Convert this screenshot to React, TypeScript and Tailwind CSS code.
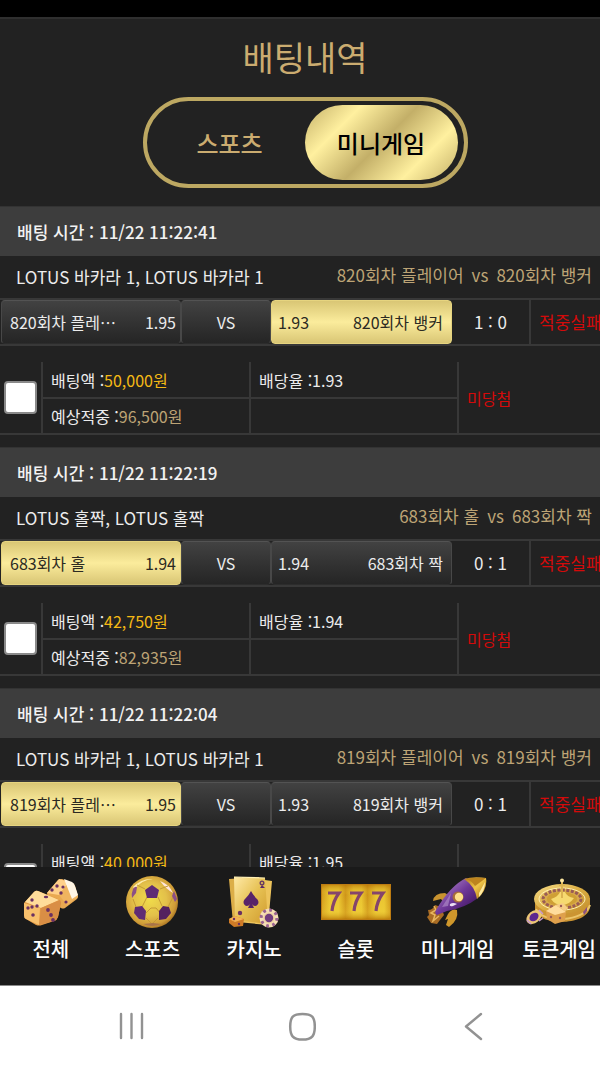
import type { ReactNode } from "react";
import clsx from "clsx";

type Pick = "home" | "away";

type Bet = {
  time: string;
  league: string;
  home: string;
  away: string;
  homeOdds: string;
  awayOdds: string;
  pick: Pick;
  score: string;
  stake: string;
  payout: string;
  odds: string;
};

const BETS: Bet[] = [
  {
    time: "11/22 11:22:41",
    league: "LOTUS 바카라 1, LOTUS 바카라 1",
    home: "820회차 플레이어",
    away: "820회차 뱅커",
    homeOdds: "1.95",
    awayOdds: "1.93",
    pick: "away",
    score: "1 : 0",
    stake: "50,000원",
    payout: "96,500원",
    odds: "1.93",
  },
  {
    time: "11/22 11:22:19",
    league: "LOTUS 홀짝, LOTUS 홀짝",
    home: "683회차 홀",
    away: "683회차 짝",
    homeOdds: "1.94",
    awayOdds: "1.94",
    pick: "home",
    score: "0 : 1",
    stake: "42,750원",
    payout: "82,935원",
    odds: "1.94",
  },
  {
    time: "11/22 11:22:04",
    league: "LOTUS 바카라 1, LOTUS 바카라 1",
    home: "819회차 플레이어",
    away: "819회차 뱅커",
    homeOdds: "1.95",
    awayOdds: "1.93",
    pick: "home",
    score: "0 : 1",
    stake: "40,000원",
    payout: "78,000원",
    odds: "1.95",
  },
];

function DiceIcon() {
  return (
    <svg viewBox="0 0 56 48" className="h-[48px] w-[56px]" aria-hidden="true">
      <path d="M24 15 35 2q2-1 4-1l10 4q2 1 3 3l3 10q0 2-1 3L42 30q-2 1-4 0L25 23z" fill="#e9a951" />
      <path d="M24 15 36 1l10 3-10 13z" fill="#ffd08a" />
      <path d="m46 4 4 2 5 13-11 8-8-10z" fill="#f0b45f" />
      <path d="m41 1 8 3q2 1 3 4l3 9-6 4-4-10z" fill="#fff5e4" />
      <path d="M1 25 11 14q2-2 4-1l20 8q3 1 3 4l-3 14q-1 3-4 4l-12 4q-3 1-6 0L3 41q-2-1-2-4z" fill="#e29a45" />
      <path d="M2 24 11 14q2-2 4-1l21 9-18 8z" fill="#ffdc9a" />
      <path d="m1 25 16 5-1 17-13-6q-2-1-2-4z" fill="#f8c06c" />
      <path d="m18 30 19-8 1 3-3 14q-1 3-4 4l-15 4z" fill="#d98e45" />
      <g fill="#6a3062">
        <circle cx="34" cy="8" r="1.7" />
        <circle cx="29" cy="12" r="1.7" />
        <circle cx="38" cy="15" r="1.7" />
        <circle cx="40" cy="9" r="1.6" />
        <circle cx="43" cy="24" r="1.6" />
        <ellipse cx="23" cy="19" rx="2.2" ry="1.2" />
        <circle cx="9" cy="22" r="1.7" />
        <circle cx="5" cy="30" r="1.7" />
        <circle cx="9" cy="29" r="1.7" />
        <circle cx="14" cy="28" r="1.7" />
        <circle cx="10" cy="37" r="1.8" />
        <circle cx="25" cy="32" r="1.9" />
        <circle cx="28" cy="37" r="1.9" />
        <circle cx="30" cy="42" r="1.9" />
      </g>
    </svg>
  );
}

function BallIcon() {
  return (
    <svg viewBox="0 0 54 54" className="h-[54px] w-[54px]" aria-hidden="true">
      <defs>
        <radialGradient id="ball" cx="46%" cy="45%" r="58%">
          <stop offset="0" stopColor="#f0dc4a" />
          <stop offset=".55" stopColor="#e3c04a" />
          <stop offset=".85" stopColor="#cf9c38" />
          <stop offset="1" stopColor="#a36e20" />
        </radialGradient>
      </defs>
      <circle cx="27" cy="27" r="26" fill="url(#ball)" />
      <path d="M8 12q9-9 20-8-12 1-18 10z" fill="#ffeeb0" />
      <path d="M35 6q9 3 13 12-7-4-13-12z" fill="#ffe6dc" />
      <path
        d="M20 14l-8-4M35 14l8-3M22 22l-5 10M33 22l4 9M21 38l5-5h5l5 6M8 24l3 8M48 22l-5 10M21 43l6 6 6-6"
        stroke="#c49a34"
        strokeWidth="1"
        fill="none"
      />
      <path d="m27 10 7 5-2 8H22l-2-8z" fill="#5f2b74" />
      <path d="m10 32 7-1 4 5-1 9-6-1-5-6z" fill="#5f2b74" />
      <path d="m44 32-6-1-4 5v9l7-1 5-6z" fill="#54215f" />
      <path d="M8 14q2-3 4-2l-1 6-4 5q-1-4 1-9z" fill="#8c4f86" />
      <path d="m49 16 3 8-2 3-3-6z" fill="#8c4f86" />
      <path d="M18 49q9 4 18 0l-8-1z" fill="#a97448" />
    </svg>
  );
}

function CardsIcon() {
  return (
    <svg viewBox="0 0 50 52" className="h-[52px] w-[50px]" aria-hidden="true">
      <defs>
        <linearGradient id="card" x1="0" y1="0" x2="1" y2="1">
          <stop offset="0" stopColor="#ffeaa8" />
          <stop offset=".5" stopColor="#e6c052" />
          <stop offset="1" stopColor="#cf9a2d" />
        </linearGradient>
      </defs>
      <path d="m0 3 30-2 4 40-30 6z" fill="#dcae48" />
      <path d="m13 1 30 4-4 44-31-3z" fill="#edc45c" />
      <path d="M5 1 36 2l3 46-33-4z" fill="url(#card)" />
      <path d="M5 1 36 2" stroke="#fff0b5" strokeWidth="1.2" />
      <path d="M22 15q2 4 6 8c3 3 1 7-2 7q-2 0-3-2l2 4h-6l2-4q-1 2-3 2c-3 0-5-4-2-7q4-4 6-8z" fill="#582469" />
      <circle cx="33" cy="7" r="1.8" fill="none" stroke="#6b3b62" strokeWidth="1.4" />
      <path d="m33 9 3 3h-5z" fill="#5b2869" />
      <circle cx="11" cy="37" r="2.2" fill="#6a3062" />
      <path d="m0 43 6-3 9 3-1 7-9 1-5-4z" fill="#cf7b27" />
      <path d="m0 43 6-3 9 3-9 3z" fill="#f3b255" />
      <circle cx="5" cy="43" r="1.2" fill="#6a3062" />
      <circle cx="10" cy="48" r="1.2" fill="#6a3062" />
      <circle cx="40" cy="42" r="9.5" fill="#f6dfb4" />
      <circle cx="40" cy="42" r="7.9" fill="none" stroke="#9a6390" strokeWidth="3" strokeDasharray="2.8 3.4" />
      <circle cx="40" cy="42" r="5.6" fill="#ecd0a0" />
      <circle cx="40" cy="42" r="4.2" fill="#713c7d" />
    </svg>
  );
}

function SlotIcon() {
  return (
    <svg viewBox="0 0 70 36" className="h-[36px] w-[70px]" aria-hidden="true">
      <defs>
        <linearGradient id="reel" x1="0" y1="0" x2="1" y2="0">
          <stop offset="0" stopColor="#c98a12" />
          <stop offset=".35" stopColor="#e6be2c" />
          <stop offset=".7" stopColor="#e6be2c" />
          <stop offset="1" stopColor="#c4820e" />
        </linearGradient>
        <linearGradient id="shade" x1="0" y1="0" x2="0" y2="1">
          <stop offset="0" stopColor="#b06c02" stopOpacity=".7" />
          <stop offset=".3" stopColor="#ffe94b" stopOpacity=".15" />
          <stop offset=".75" stopColor="#ffe94b" stopOpacity=".3" />
          <stop offset="1" stopColor="#b06c02" stopOpacity=".8" />
        </linearGradient>
      </defs>
      <path d="M0 0h25v36H0z" fill="url(#reel)" />
      <path d="M25 0h22v36H25z" fill="url(#reel)" />
      <path d="M47 0h23v36H47z" fill="url(#reel)" />
      <rect width="70" height="36" fill="url(#shade)" />
      <path d="M.5.5h69v35H.5z" fill="none" stroke="#bd7c12" />
      <path d="M7 9h11q-6 8-7 18M29 9h11q-6 8-7 18M51 9h11q-6 8-7 18" fill="none" stroke="#85456b" strokeWidth="3.2" />
    </svg>
  );
}

function RocketIcon() {
  return (
    <svg viewBox="0 0 62 50" className="h-[50px] w-[62px]" aria-hidden="true">
      <defs>
        <linearGradient id="hull" x1="0" y1="0" x2="1" y2="1">
          <stop offset=".25" stopColor="#9a6cb8" />
          <stop offset=".5" stopColor="#6f3899" />
          <stop offset=".85" stopColor="#431763" />
        </linearGradient>
        <linearGradient id="cone" x1="0" y1="0" x2="1" y2="1">
          <stop offset="0" stopColor="#b0771a" />
          <stop offset=".5" stopColor="#efc548" />
          <stop offset="1" stopColor="#a66d14" />
        </linearGradient>
      </defs>
      <path d="M7 24q1-8 12-8l6 4-5 8-5-6z" fill="#c9932f" />
      <path d="M22 37q4-6 9-4 2 10-8 17l-3-2 2-6-3 1z" fill="#cf972b" />
      <path d="M9 28q-2 5-7 5l1 5-2 2 4 6 6 1 3-4 4-5-3-8z" fill="#a96c24" />
      <path d="m8 29 2 4-5 3 4 2-2 6 6-5" fill="none" stroke="#e8b65e" strokeWidth="1.5" />
      <path d="M11 38q-3-2-1-5Q24 9 40 1q12 6 12 20-13 10-31 13z" fill="url(#hull)" />
      <path d="M38 2Q47-1 60 1q2 12-9 21Q49 9 38 2z" fill="url(#cone)" />
      <path d="M40 2q9-2 20-1L49 9q-3-5-9-7z" fill="#bd841e" />
      <path d="m53 16 6-11q0 9-6 15z" fill="#ffeaa0" />
      <circle cx="32" cy="20" r="5.5" fill="#a76c3c" />
      <circle cx="33" cy="20" r="4.2" fill="#ffe08a" />
      <path d="M24 27q3-2 7 0l-4 2q-4 1-3-2z" fill="#eee0f5" />
      <path d="m16 30 9-14-3 13z" fill="#b493cc" opacity=".6" />
    </svg>
  );
}

function RouletteIcon() {
  return (
    <svg viewBox="0 0 66 48" className="h-[48px] w-[66px]" aria-hidden="true">
      <defs>
        <linearGradient id="rim" x1="0" y1="0" x2="1" y2="1">
          <stop offset="0" stopColor="#f6dd8a" />
          <stop offset=".5" stopColor="#dcae42" />
          <stop offset="1" stopColor="#c08c2c" />
        </linearGradient>
      </defs>
      <path d="M9 21v10c3 18 53 17 55-2V20z" fill="#cb9432" />
      <path d="M10 31c6 15 49 13 54-4" fill="none" stroke="#ecc56a" strokeWidth="2" />
      <ellipse cx="36" cy="21" rx="28" ry="15" fill="url(#rim)" />
      <ellipse cx="36" cy="21" rx="23" ry="11" fill="none" stroke="#fff0b4" strokeWidth="1" />
      <ellipse cx="36" cy="21" rx="20" ry="9" fill="#d8aa4c" />
      <ellipse cx="36" cy="21" rx="19" ry="9" fill="none" stroke="#9a5c55" strokeWidth="3" strokeDasharray="3 1.500" />
      <ellipse cx="36" cy="21" rx="15" ry="7" fill="#cf9f35" />
      <path d="M25 21q7-2 9-7h5q2 5 9 6-5 7-12 7t-11-6z" fill="#f6da70" />
      <path d="M36 20V3M33 7h6" stroke="#dcb452" strokeWidth="2" />
      <circle cx="36" cy="2.500" r="2" fill="#ffe9a2" />
      <ellipse cx="8" cy="39" rx="8.500" ry="6" fill="#ecc676" transform="rotate(-40 8 39)" />
      <ellipse cx="8" cy="39" rx="5" ry="3.800" fill="#5e2890" transform="rotate(-40 8 39)" />
      <path d="m13 32 4 4M1 42l4 4M13 43l4-3" stroke="#c79ad0" strokeWidth="1.500" />
      <path d="m20 33 10-6 10 7-1 9-10 3-8-5z" fill="#dfa04c" />
      <path d="m20 33 10-6 10 7-11 3z" fill="#ffdc9c" />
      <path d="m29 27 8-2 5 5-3 3z" fill="#f6cd85" />
      <circle cx="25" cy="39" r="1.200" fill="#9b5a57" />
      <circle cx="34" cy="40" r="1.200" fill="#9b5a57" />
      <circle cx="35" cy="28" r="1.200" fill="#9b5a57" />
      <path d="m57 34 4-5v4l-3 4z" fill="#8a5080" />
    </svg>
  );
}

const MENU: { label: string; icon: ReactNode }[] = [
  { label: "전체", icon: <DiceIcon /> },
  { label: "스포츠", icon: <BallIcon /> },
  { label: "카지노", icon: <CardsIcon /> },
  { label: "슬롯", icon: <SlotIcon /> },
  { label: "미니게임", icon: <RocketIcon /> },
  { label: "토큰게임", icon: <RouletteIcon /> },
];

function OddsCell({ selected, children }: { selected?: boolean; children: ReactNode }) {
  return (
    <div
      className={clsx(
        "flex h-full min-w-0 items-center rounded border",
        selected
          ? "border-[#e6d47f] bg-linear-to-b from-[#d9c675] via-[#fbec9c] to-[#d9c675] text-[#2c2a22]"
          : "border-x-[#484848] border-t-[#535353] border-b-[#2c2c2c] bg-linear-to-b from-[#424242] to-[#252525] text-[#ececec]",
      )}
    >
      {children}
    </div>
  );
}

function BetCard({ bet }: { bet: Bet }) {
  return (
    <li className="border-t border-[#333333]">
      <h2 className="h-[49px] bg-[#3d3d3d] pl-[17px] text-[17px] leading-[50px] font-medium text-[#f2f2f2]">
        배팅 시간 : {bet.time}
      </h2>

      <div className="flex h-[42px] items-center justify-between pr-[18px] pl-4 text-[17px] leading-6">
        <p className="text-[#ececec]">{bet.league}</p>
        <p className="flex gap-2 pb-1 text-[#bda475]">
          <span>{bet.home}</span>
          <span>vs</span>
          <span>{bet.away}</span>
        </p>
      </div>

      <div className="grid h-[48px] grid-cols-[180px_90px_181px_79px_1fr] border-y-2 border-[#383838] pl-px text-base">
        <OddsCell selected={bet.pick === "home"}>
          <div className="flex w-full min-w-0 justify-between gap-6 pr-1 pl-2">
            <span className="truncate">{bet.home}</span>
            <span>{bet.homeOdds}</span>
          </div>
        </OddsCell>
        <OddsCell>
          <span className="w-full text-center">VS</span>
        </OddsCell>
        <OddsCell selected={bet.pick === "away"}>
          <div className="flex w-full min-w-0 justify-between gap-6 pr-2 pl-1.5">
            <span>{bet.awayOdds}</span>
            <span className="truncate">{bet.away}</span>
          </div>
        </OddsCell>
        <div className="flex items-center justify-center border-r-2 border-[#383838] text-[17px] text-[#ececec]">
          {bet.score}
        </div>
        <div className="flex items-center pl-2 text-[17px] whitespace-nowrap text-[#d40a0a]">적중실패</div>
      </div>

      <table className="mt-4 mb-3 w-full table-fixed border-b-2 border-[#383838] text-base text-[#ececec]">
        <colgroup>
          <col className="w-[42px]" />
          <col className="w-[208px]" />
          <col className="w-[208px]" />
          <col />
        </colgroup>
        <tbody>
          <tr className="h-[36px]">
            <td rowSpan={2} className="pl-1 align-middle">
              <input
                type="checkbox"
                aria-label={`${bet.time} 선택`}
                className="block size-[33px] appearance-none rounded border-2 border-[#8a8a8a] bg-white checked:bg-[#d9c675]"
              />
            </td>
            <td className="border-b-2 border-l-2 border-[#383838] pl-2">
              배팅액 :<span className="text-[#f5b915]">{bet.stake}</span>
            </td>
            <td className="border-b-2 border-l-2 border-[#383838] pl-2">배당율 :{bet.odds}</td>
            <td rowSpan={2} className="border-l-2 border-[#383838] pl-2 text-[#d40a0a]">
              미당첨
            </td>
          </tr>
          <tr className="h-[36px]">
            <td className="border-l-2 border-[#383838] pl-2">
              예상적중 :<span className="text-[#bda475]">{bet.payout}</span>
            </td>
            <td className="border-l-2 border-[#383838]" />
          </tr>
        </tbody>
      </table>
    </li>
  );
}

export default function App() {
  return (
    <div
      lang="ko"
      className="flex h-screen flex-col overflow-hidden bg-[#222222] font-['Noto_Sans_CJK_KR',sans-serif]"
    >
      <div className="h-[17px] shrink-0 bg-black" />

      {/* content runs a little wider than the viewport, as on the device */}
      <div className="flex min-h-0 w-[calc(100%+10px)] flex-1 flex-col">
        <header className="flex shrink-0 flex-col items-center border-t-2 border-[#2f2f2f] pb-[18px]">
          <h1 className="pt-3 text-[34px] leading-[52px] text-[#cbac70]">배팅내역</h1>
          <div className="mt-[14px] flex h-[91px] w-[325px] rounded-full border-4 border-[#bda862] p-1 pr-[6px] text-2xl">
            <button className="flex-1 pl-1 font-medium text-[#cbac70]">스포츠</button>
            <button className="w-[153px] rounded-full bg-[linear-gradient(135deg,#c3af68_0%,#fff09f_25%,#c3af68_50%,#fff09f_75%,#c3af68_100%)] font-medium text-black">
              미니게임
            </button>
          </div>
        </header>

        <ul className="min-h-0 flex-1 overflow-hidden">
          {BETS.map((bet) => (
            <BetCard key={bet.time} bet={bet} />
          ))}
        </ul>

        <nav className="grid h-[118px] shrink-0 grid-cols-6 bg-[#1a1a1a]">
          {MENU.map((item) => (
            <a key={item.label} href="#" className="flex flex-col items-center pt-2 text-white">
              <span className="flex h-[54px] items-center">{item.icon}</span>
              <span className="mt-1 text-xl leading-8 font-medium whitespace-nowrap">{item.label}</span>
            </a>
          ))}
        </nav>
      </div>

      <div className="flex h-[82px] shrink-0 items-center justify-between border-t border-[#8a8a8a] bg-white px-[116px] text-[#929292]">
        <button aria-label="최근 앱">
          <svg viewBox="0 0 32 32" className="size-8" fill="none" stroke="currentColor" strokeWidth="2.400" strokeLinecap="round">
            <path d="M5 3v24M15.500 3v24M26 3v24" />
          </svg>
        </button>
        <button aria-label="홈">
          <svg viewBox="0 0 32 32" className="size-8" fill="none" stroke="currentColor" strokeWidth="2.500">
            <path d="M18.500 3C28 3 30.800 6 30.800 15.500S28 28.500 18.500 28.500 6.200 25 6.200 15.500 9 3 18.500 3z" />
          </svg>
        </button>
        <button aria-label="뒤로">
          <svg viewBox="0 0 32 32" className="size-8" fill="none" stroke="currentColor" strokeWidth="2.400" strokeLinecap="round" strokeLinejoin="round">
            <path d="M29 3 14 15.500 29 28" />
          </svg>
        </button>
      </div>
    </div>
  );
}
